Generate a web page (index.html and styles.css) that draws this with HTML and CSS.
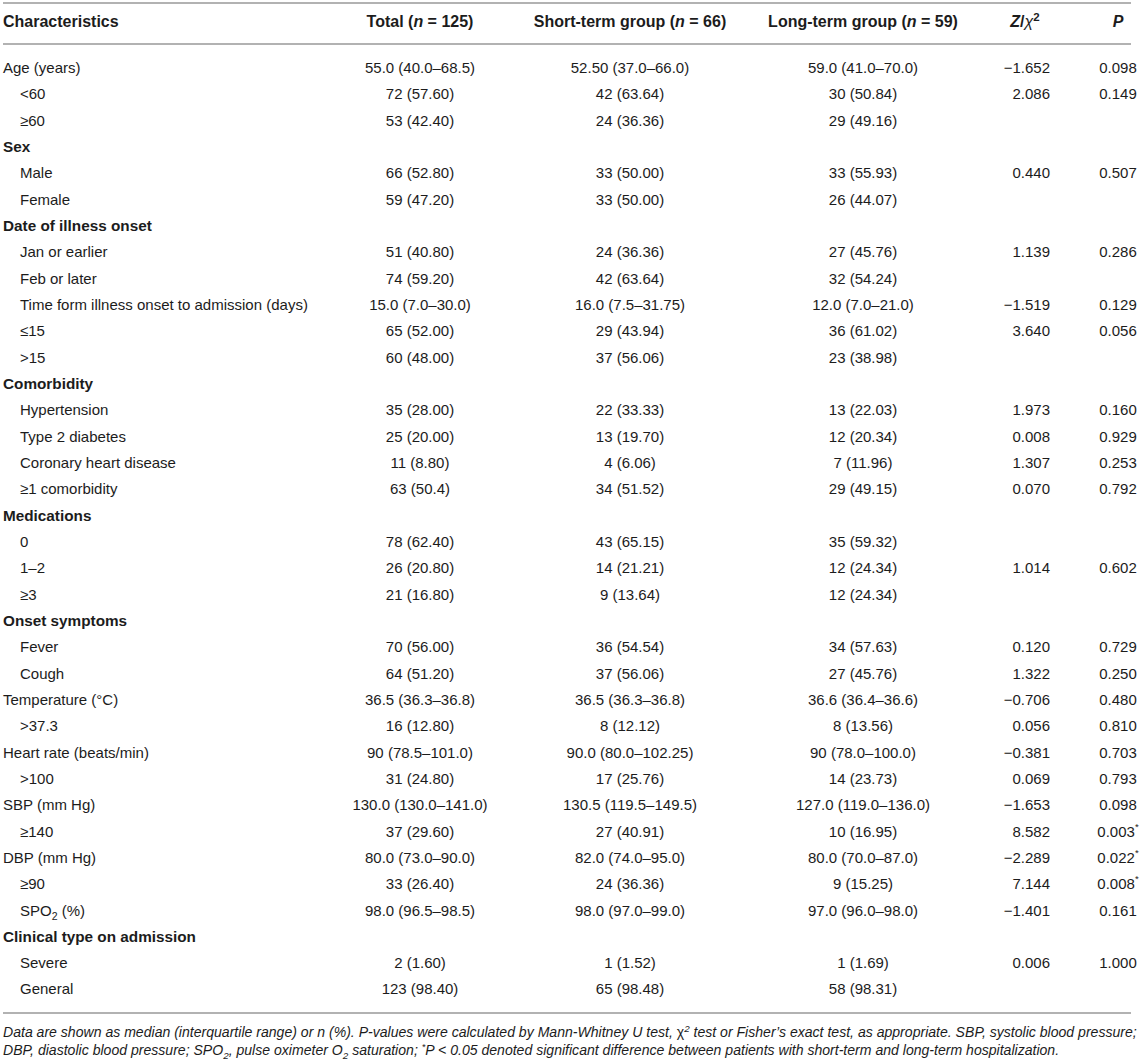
FILE: index.html
```html
<!DOCTYPE html>
<html lang="en">
<head>
<meta charset="utf-8">
<title>Table</title>
<link rel="stylesheet" href="styles.css">
</head>
<body>
<div class="table">
  <div class="rule"></div>
  <div class="row head">
    <div class="lab">Characteristics</div>
    <div class="c">Total (<i>n</i> = 125)</div>
    <div class="c">Short-term group (<i>n</i> = 66)</div>
    <div class="c">Long-term group (<i>n</i> = 59)</div>
    <div class="zh"><i>Z</i>/<span class="chi">χ</span><sup>2</sup></div>
    <div class="p"><i>P</i></div>
  </div>
  <div class="rule"></div>
  <div class="body">
    <div class="row"><div class="lab">Age (years)</div><div class="c">55.0 (40.0–68.5)</div><div class="c">52.50 (37.0–66.0)</div><div class="c">59.0 (41.0–70.0)</div><div class="z">−1.652</div><div class="p">0.098</div></div>
    <div class="row"><div class="lab ind">&lt;60</div><div class="c">72 (57.60)</div><div class="c">42 (63.64)</div><div class="c">30 (50.84)</div><div class="z">2.086</div><div class="p">0.149</div></div>
    <div class="row"><div class="lab ind">≥60</div><div class="c">53 (42.40)</div><div class="c">24 (36.36)</div><div class="c">29 (49.16)</div><div class="z"></div><div class="p"></div></div>
    <div class="row"><div class="lab sec">Sex</div></div>
    <div class="row"><div class="lab ind">Male</div><div class="c">66 (52.80)</div><div class="c">33 (50.00)</div><div class="c">33 (55.93)</div><div class="z">0.440</div><div class="p">0.507</div></div>
    <div class="row"><div class="lab ind">Female</div><div class="c">59 (47.20)</div><div class="c">33 (50.00)</div><div class="c">26 (44.07)</div><div class="z"></div><div class="p"></div></div>
    <div class="row"><div class="lab sec">Date of illness onset</div></div>
    <div class="row"><div class="lab ind">Jan or earlier</div><div class="c">51 (40.80)</div><div class="c">24 (36.36)</div><div class="c">27 (45.76)</div><div class="z">1.139</div><div class="p">0.286</div></div>
    <div class="row"><div class="lab ind">Feb or later</div><div class="c">74 (59.20)</div><div class="c">42 (63.64)</div><div class="c">32 (54.24)</div><div class="z"></div><div class="p"></div></div>
    <div class="row"><div class="lab ind">Time form illness onset to admission (days)</div><div class="c">15.0 (7.0–30.0)</div><div class="c">16.0 (7.5–31.75)</div><div class="c">12.0 (7.0–21.0)</div><div class="z">−1.519</div><div class="p">0.129</div></div>
    <div class="row"><div class="lab ind">≤15</div><div class="c">65 (52.00)</div><div class="c">29 (43.94)</div><div class="c">36 (61.02)</div><div class="z">3.640</div><div class="p">0.056</div></div>
    <div class="row"><div class="lab ind">&gt;15</div><div class="c">60 (48.00)</div><div class="c">37 (56.06)</div><div class="c">23 (38.98)</div><div class="z"></div><div class="p"></div></div>
    <div class="row"><div class="lab sec">Comorbidity</div></div>
    <div class="row"><div class="lab ind">Hypertension</div><div class="c">35 (28.00)</div><div class="c">22 (33.33)</div><div class="c">13 (22.03)</div><div class="z">1.973</div><div class="p">0.160</div></div>
    <div class="row"><div class="lab ind">Type 2 diabetes</div><div class="c">25 (20.00)</div><div class="c">13 (19.70)</div><div class="c">12 (20.34)</div><div class="z">0.008</div><div class="p">0.929</div></div>
    <div class="row"><div class="lab ind">Coronary heart disease</div><div class="c">11 (8.80)</div><div class="c">4 (6.06)</div><div class="c">7 (11.96)</div><div class="z">1.307</div><div class="p">0.253</div></div>
    <div class="row"><div class="lab ind">≥1 comorbidity</div><div class="c">63 (50.4)</div><div class="c">34 (51.52)</div><div class="c">29 (49.15)</div><div class="z">0.070</div><div class="p">0.792</div></div>
    <div class="row"><div class="lab sec">Medications</div></div>
    <div class="row"><div class="lab ind">0</div><div class="c">78 (62.40)</div><div class="c">43 (65.15)</div><div class="c">35 (59.32)</div><div class="z"></div><div class="p"></div></div>
    <div class="row"><div class="lab ind">1–2</div><div class="c">26 (20.80)</div><div class="c">14 (21.21)</div><div class="c">12 (24.34)</div><div class="z">1.014</div><div class="p">0.602</div></div>
    <div class="row"><div class="lab ind">≥3</div><div class="c">21 (16.80)</div><div class="c">9 (13.64)</div><div class="c">12 (24.34)</div><div class="z"></div><div class="p"></div></div>
    <div class="row"><div class="lab sec">Onset symptoms</div></div>
    <div class="row"><div class="lab ind">Fever</div><div class="c">70 (56.00)</div><div class="c">36 (54.54)</div><div class="c">34 (57.63)</div><div class="z">0.120</div><div class="p">0.729</div></div>
    <div class="row"><div class="lab ind">Cough</div><div class="c">64 (51.20)</div><div class="c">37 (56.06)</div><div class="c">27 (45.76)</div><div class="z">1.322</div><div class="p">0.250</div></div>
    <div class="row"><div class="lab">Temperature (°C)</div><div class="c">36.5 (36.3–36.8)</div><div class="c">36.5 (36.3–36.8)</div><div class="c">36.6 (36.4–36.6)</div><div class="z">−0.706</div><div class="p">0.480</div></div>
    <div class="row"><div class="lab ind">&gt;37.3</div><div class="c">16 (12.80)</div><div class="c">8 (12.12)</div><div class="c">8 (13.56)</div><div class="z">0.056</div><div class="p">0.810</div></div>
    <div class="row"><div class="lab">Heart rate (beats/min)</div><div class="c">90 (78.5–101.0)</div><div class="c">90.0 (80.0–102.25)</div><div class="c">90 (78.0–100.0)</div><div class="z">−0.381</div><div class="p">0.703</div></div>
    <div class="row"><div class="lab ind">&gt;100</div><div class="c">31 (24.80)</div><div class="c">17 (25.76)</div><div class="c">14 (23.73)</div><div class="z">0.069</div><div class="p">0.793</div></div>
    <div class="row"><div class="lab">SBP (mm Hg)</div><div class="c">130.0 (130.0–141.0)</div><div class="c">130.5 (119.5–149.5)</div><div class="c">127.0 (119.0–136.0)</div><div class="z">−1.653</div><div class="p">0.098</div></div>
    <div class="row"><div class="lab ind">≥140</div><div class="c">37 (29.60)</div><div class="c">27 (40.91)</div><div class="c">10 (16.95)</div><div class="z">8.582</div><div class="p">0.003<sup class="ast">*</sup></div></div>
    <div class="row"><div class="lab">DBP (mm Hg)</div><div class="c">80.0 (73.0–90.0)</div><div class="c">82.0 (74.0–95.0)</div><div class="c">80.0 (70.0–87.0)</div><div class="z">−2.289</div><div class="p">0.022<sup class="ast">*</sup></div></div>
    <div class="row"><div class="lab ind">≥90</div><div class="c">33 (26.40)</div><div class="c">24 (36.36)</div><div class="c">9 (15.25)</div><div class="z">7.144</div><div class="p">0.008<sup class="ast">*</sup></div></div>
    <div class="row"><div class="lab ind">SPO<sub>2</sub> (%)</div><div class="c">98.0 (96.5–98.5)</div><div class="c">98.0 (97.0–99.0)</div><div class="c">97.0 (96.0–98.0)</div><div class="z">−1.401</div><div class="p">0.161</div></div>
    <div class="row"><div class="lab sec">Clinical type on admission</div></div>
    <div class="row"><div class="lab ind">Severe</div><div class="c">2 (1.60)</div><div class="c">1 (1.52)</div><div class="c">1 (1.69)</div><div class="z">0.006</div><div class="p">1.000</div></div>
    <div class="row"><div class="lab ind">General</div><div class="c">123 (98.40)</div><div class="c">65 (98.48)</div><div class="c">58 (98.31)</div><div class="z"></div><div class="p"></div></div>
  </div>
  <div class="rule"></div>
  <p class="note">Data are shown as median (interquartile range) or n (%). P-values were calculated by Mann-Whitney U test, <span class="chi up">χ</span><sup>2</sup> test or Fisher’s exact test, as appropriate. SBP, systolic blood pressure;<br>DBP, diastolic blood pressure; SPO<sub>2</sub>, pulse oximeter O<sub>2</sub> saturation; <sup class="ast">*</sup>P &lt; 0.05 denoted significant difference between patients with short-term and long-term hospitalization.</p>
</div>
</body>
</html>
```

FILE: styles.css
```css
html, body {
  margin: 0;
  padding: 0;
  background: #ffffff;
  overflow-x: hidden;
}

body {
  font-family: "Liberation Sans", Arial, sans-serif;
  font-size: 15px;
  color: #1c1c1c;
}

.table {
  margin-left: 3px;
  width: 1140px;
  padding-top: 2px;
}

.rule {
  width: 1128px;
  height: 2px;
  background: #b2b2b2;
}

.row {
  display: grid;
  grid-template-columns: 327px 180px 240px 226px 98px 69px;
  line-height: 26.34px;
  height: 26.34px;
  white-space: nowrap;
}

.head {
  font-weight: bold;
  font-size: 16px;
  line-height: 20px;
  height: 20px;
  padding: 8px 0 11px;
}

.body {
  padding: 10px 0 9px;
}

.lab.ind {
  padding-left: 17px;
}

.lab.sec {
  font-weight: bold;
  font-size: 15.3px;
}

.c {
  text-align: center;
}

.z {
  text-align: right;
  padding-right: 24px;
}

.zh {
  text-align: center;
}

.p {
  text-align: center;
  padding-left: 19px;
}

sup, sub {
  font-size: 0.7em;
  line-height: 0;
}

.head sup {
  font-size: 0.72em;
  vertical-align: 0.55em;
}

.chi {
  font-style: italic;
  font-weight: normal;
}

.ast {
  font-size: 0.65em;
  vertical-align: 0.7em;
}

.note {
  margin: 9px 0 0;
  font-style: italic;
  font-size: 14.07px;
  line-height: 18px;
  white-space: nowrap;
}

.note sup {
  vertical-align: 0.5em;
}

.chi.up {
  font-style: normal;
}
```
